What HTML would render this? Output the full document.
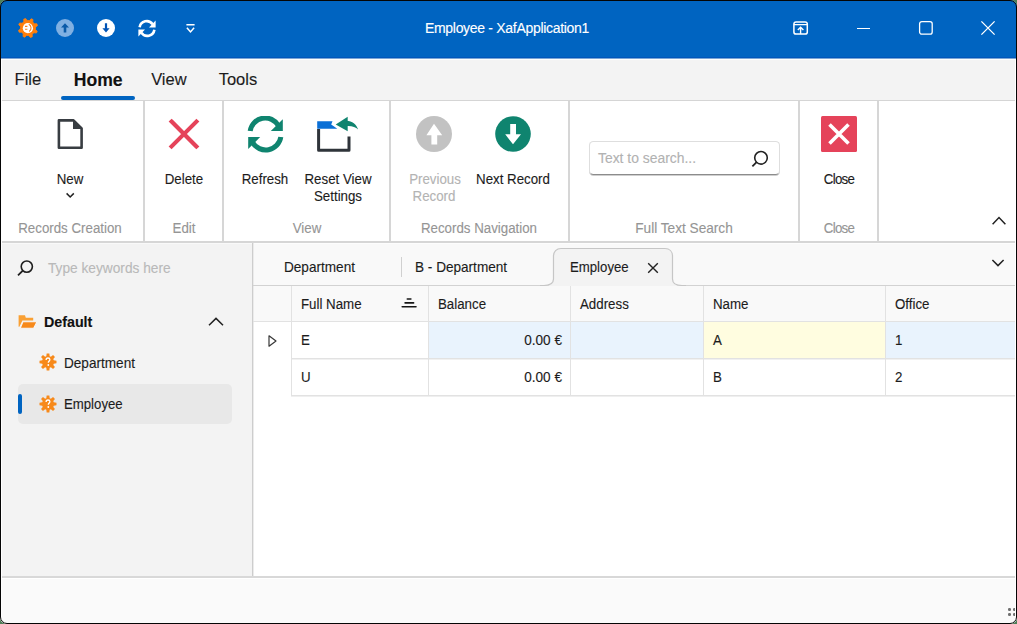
<!DOCTYPE html>
<html><head><meta charset="utf-8"><title>Employee - XafApplication1</title>
<style>
html,body{margin:0;padding:0;}
body{width:1017px;height:624px;overflow:hidden;background:#4f7f58;position:relative;font-family:"Liberation Sans",sans-serif;}
#win{position:absolute;left:0;top:0;width:1017px;height:624px;border-radius:7px;overflow:hidden;background:#fff;}
.t{position:absolute;white-space:nowrap;-webkit-text-stroke:0.12px currentColor;}
.b{position:absolute;display:block;}
#frame{position:absolute;left:0;top:0;width:1017px;height:624px;box-sizing:border-box;border:1px solid #050505;border-radius:7px;pointer-events:none;}
#hl{position:absolute;left:1px;top:59px;width:1015px;height:564px;box-sizing:border-box;border-left:1px solid #fff;border-right:1px solid #fff;pointer-events:none;}
</style></head>
<body><div id="win">
<div class="b" style="left:0px;top:0px;width:1017px;height:58px;background:#0064c1;"></div>
<div class="b" style="left:0px;top:57px;width:1017px;height:1px;background:#0056bb;"></div>
<svg class="b" style="left:16px;top:16px" width="24" height="24" viewBox="0 0 24 24"><path d="M7.81,5.66 L7.73,3.18 L9.60,2.50 L11.14,4.45 L13.52,4.55 L15.21,2.74 L17.03,3.59 L16.73,6.05 L18.34,7.81 L20.82,7.73 L21.50,9.60 L19.55,11.14 L19.45,13.52 L21.26,15.21 L20.41,17.03 L17.95,16.73 L16.19,18.34 L16.27,20.82 L14.40,21.50 L12.86,19.55 L10.48,19.45 L8.79,21.26 L6.97,20.41 L7.27,17.95 L5.66,16.19 L3.18,16.27 L2.50,14.40 L4.45,12.86 L4.55,10.48 L2.74,8.79 L3.59,6.97 L6.05,7.27Z" fill="#ff7f0a" stroke="#ff7f0a" stroke-width="0.8" stroke-linejoin="round"/><circle cx="11.9" cy="12.2" r="5.1" fill="#fff"/><path d="M9 10.4h2.4M9 13.3h2.4" stroke="#f58220" stroke-width="1.1"/><path d="M12.8 8.3a4.2 4.2 0 0 1 0.4 7.2" stroke="#f58220" stroke-width="1.1" fill="none"/></svg>
<svg class="b" style="left:56px;top:19px" width="18" height="18" viewBox="0 0 18 18"><circle cx="9" cy="9" r="9" fill="#80b0e2"/><path d="M9 4.2 L13 8.6 H10.3 V13.6 H7.7 V8.6 H5 Z" fill="#0a5aa8"/></svg>
<svg class="b" style="left:97px;top:19px" width="18" height="18" viewBox="0 0 18 18"><circle cx="9" cy="9" r="9" fill="#fff"/><path d="M9 13.6 L12.6 9.3 H10.1 V4.2 H7.9 V9.3 H5.4 Z" fill="#0053b5"/></svg>
<svg class="b" style="left:137px;top:19px" width="20" height="19" viewBox="0 0 20 19"><path d="M2.6 8.2 A7.2 7.2 0 0 1 15.6 5.2" stroke="#fff" stroke-width="2.6" fill="none"/><path d="M18.6 1.6 V8.4 H12 Z" fill="#fff"/><path d="M17.4 10.8 A7.2 7.2 0 0 1 4.4 13.8" stroke="#fff" stroke-width="2.6" fill="none"/><path d="M1.4 17.4 V10.6 H8 Z" fill="#fff"/></svg>
<svg class="b" style="left:185px;top:22px" width="11" height="12" viewBox="0 0 11 12"><path d="M1.4 2.8 H9.6" stroke="#fff" stroke-width="1.5"/><path d="M1.9 5.7 L5.5 9.9 L9.1 5.7" stroke="#fff" stroke-width="1.5" fill="none"/></svg>
<div class="t" style="top:19.52px;font-size:14.56px;line-height:17.47px;color:#ffffff;letter-spacing:-0.31px;transform:scaleX(0.9615);transform-origin:50% 0;left:357.35px;width:300px;text-align:center;">Employee - XafApplication1</div>
<svg class="b" style="left:792px;top:20px" width="18" height="16" viewBox="0 0 18 16"><rect x="1.9" y="1.9" width="13.4" height="12.2" rx="2.2" stroke="#fff" stroke-width="1.5" fill="none"/><path d="M1.9 4.6 H15.3" stroke="#fff" stroke-width="1.3"/><path d="M8.6 14 V7.4 M5.8 10 L8.6 7.2 L11.4 10" stroke="#fff" stroke-width="1.4" fill="none"/></svg>
<div class="b" style="left:857px;top:27.9px;width:13.2px;height:1.5px;background:#fff;"></div>
<svg class="b" style="left:918px;top:20px" width="16" height="16" viewBox="0 0 16 16"><rect x="1.6" y="1.6" width="12.6" height="12.6" rx="2.2" stroke="#fff" stroke-width="1.3" fill="none"/></svg>
<svg class="b" style="left:980px;top:20px" width="16" height="16" viewBox="0 0 16 16"><path d="M1.4 1.4 L14.6 14.6 M14.6 1.4 L1.4 14.6" stroke="#fff" stroke-width="1.3"/></svg>
<div class="b" style="left:0px;top:58px;width:1017px;height:42px;background:#f3f3f3;"></div>
<div class="b" style="left:0px;top:58px;width:1017px;height:1px;background:#7aa6d6;"></div>
<div class="b" style="left:0px;top:59px;width:1017px;height:1px;background:#fdfdfd;"></div>
<div class="t" style="top:70.38px;font-size:16.5px;line-height:19.8px;color:#1c1c1c;left:14.60px;">File</div>
<div class="t" style="top:70.14px;font-size:17.6px;line-height:21.12px;color:#111;font-weight:700;left:-51.80px;width:300px;text-align:center;">Home</div>
<div class="t" style="top:70.38px;font-size:16.5px;line-height:19.8px;color:#1c1c1c;left:18.90px;width:300px;text-align:center;">View</div>
<div class="t" style="top:70.38px;font-size:16.5px;line-height:19.8px;color:#1c1c1c;left:87.90px;width:300px;text-align:center;">Tools</div>
<div class="b" style="left:60.8px;top:96.1px;width:74.3px;height:3.7px;background:#0064c1;border-radius:2px;"></div>
<div class="b" style="left:0px;top:100px;width:1017px;height:1px;background:#d5d5d5;"></div>
<div class="b" style="left:0px;top:101px;width:1017px;height:140px;background:#ffffff;"></div>
<div class="b" style="left:0px;top:241px;width:1017px;height:2px;background:#d6d6d6;"></div>
<div class="b" style="left:143px;top:101px;width:2px;height:140px;background:#d6d6d6;"></div>
<div class="b" style="left:222px;top:101px;width:2px;height:140px;background:#d6d6d6;"></div>
<div class="b" style="left:389px;top:101px;width:2px;height:140px;background:#d6d6d6;"></div>
<div class="b" style="left:568px;top:101px;width:2px;height:140px;background:#d6d6d6;"></div>
<div class="b" style="left:798px;top:101px;width:2px;height:140px;background:#d6d6d6;"></div>
<div class="b" style="left:877px;top:101px;width:2px;height:140px;background:#d6d6d6;"></div>
<svg class="b" style="left:56px;top:118px" width="29" height="33" viewBox="0 0 29 33"><path d="M2.9 2.4 H17.5 L25.6 10.5 V29.8 H2.9 Z" stroke="#383d42" stroke-width="2.6" fill="none" stroke-linejoin="round"/><path d="M17 1.6 V11 H26.4 Z" fill="#383d42"/></svg>
<div class="t" style="top:170.71px;font-size:13.83px;line-height:16.6px;color:#1c1c1c;transform:scaleX(0.9615);transform-origin:50% 0;left:-79.70px;width:300px;text-align:center;">New</div>
<svg class="b" style="left:65px;top:191px" width="10" height="8" viewBox="0 0 10 8"><path d="M1.6 2.4 L5.2 6 L8.8 2.4" stroke="#222" stroke-width="1.5" fill="none"/></svg>
<svg class="b" style="left:168px;top:118px" width="32" height="32" viewBox="0 0 32 32"><path d="M3.6 3.6 L28.4 28.4 M28.4 3.6 L3.6 28.4" stroke="#e5435a" stroke-width="4.2" stroke-linecap="square"/></svg>
<div class="t" style="top:170.71px;font-size:13.83px;line-height:16.6px;color:#1c1c1c;transform:scaleX(0.9615);transform-origin:50% 0;left:33.50px;width:300px;text-align:center;">Delete</div>
<svg class="b" style="left:247px;top:116px" width="37" height="37" viewBox="0 0 37 37"><path d="M3.2 15 A15.2 15.2 0 0 1 31.4 9.6" stroke="#0f846f" stroke-width="5" fill="none"/><path d="M35.8 3.2 V15 H23.8 Z" fill="#0f846f"/><path d="M33.8 21 A15.2 15.2 0 0 1 5.6 26.4" stroke="#0f846f" stroke-width="5" fill="none"/><path d="M1.2 33 V21 H13.2 Z" fill="#0f846f"/></svg>
<div class="t" style="top:170.71px;font-size:13.83px;line-height:16.6px;color:#1c1c1c;transform:scaleX(0.9615);transform-origin:50% 0;left:115.00px;width:300px;text-align:center;">Refresh</div>
<svg class="b" style="left:315px;top:114px" width="46" height="40" viewBox="0 0 46 40"><path d="M3.6 15 V36.2 H34 V22.5" stroke="#2f343a" stroke-width="3" fill="none" stroke-linejoin="round"/><path d="M2.2 7.2 H17.5 L16.2 10.4 L22.3 14.8 H2.2 Z" fill="#0a6fd6"/><path d="M20.7 10.4 L32.7 2.8 V17.3 Z" fill="#0f846f"/><path d="M31 6.8 C37 6.6 41.5 10.2 43.1 15.6 C40.6 12.8 36.8 11.6 31 12 Z" fill="#0f846f"/></svg>
<div class="t" style="top:170.71px;font-size:13.83px;line-height:16.6px;color:#1c1c1c;transform:scaleX(0.9615);transform-origin:50% 0;left:187.90px;width:300px;text-align:center;">Reset View</div>
<div class="t" style="top:187.81px;font-size:13.83px;line-height:16.6px;color:#1c1c1c;transform:scaleX(0.9615);transform-origin:50% 0;left:187.60px;width:300px;text-align:center;">Settings</div>
<svg class="b" style="left:416px;top:116px" width="36" height="36" viewBox="0 0 36 36"><circle cx="18" cy="18" r="18" fill="#c2c2c2"/><path d="M18 7.8 L26.2 19.2 H21.2 V28.5 H15.4 V19.2 H10.4 Z" fill="#fff"/></svg>
<div class="t" style="top:170.71px;font-size:13.83px;line-height:16.6px;color:#b3b3b3;transform:scaleX(0.9615);transform-origin:50% 0;left:284.50px;width:300px;text-align:center;">Previous</div>
<div class="t" style="top:187.81px;font-size:13.83px;line-height:16.6px;color:#b3b3b3;transform:scaleX(0.9615);transform-origin:50% 0;left:284.40px;width:300px;text-align:center;">Record</div>
<svg class="b" style="left:495px;top:116px" width="36" height="36" viewBox="0 0 36 36"><circle cx="18" cy="18" r="17.8" fill="#0f846f"/><path d="M18 28.3 L26 18.3 H21 V8 H15.2 V18.3 H10.2 Z" fill="#fff"/></svg>
<div class="t" style="top:170.71px;font-size:13.83px;line-height:16.6px;color:#1c1c1c;transform:scaleX(0.9615);transform-origin:50% 0;left:363.00px;width:300px;text-align:center;">Next Record</div>
<div class="b" style="left:588.5px;top:141px;width:191.5px;height:34.3px;background:#fff;border:1px solid #dedede;border-bottom:1px solid #8c8c8c;border-radius:4.5px;box-sizing:border-box;box-shadow:0 1px 0 #cfcfcf;"></div>
<div class="t" style="top:149.81px;font-size:14.46px;line-height:17.35px;color:#b2b2b2;transform:scaleX(0.9615);transform-origin:0 0;left:597.60px;">Text to search...</div>
<svg class="b" style="left:750px;top:149px" width="20" height="20" viewBox="0 0 20 20"><circle cx="11" cy="8.8" r="6.3" stroke="#222" stroke-width="1.6" fill="none"/><path d="M6.6 13.2 L2.4 17.4" stroke="#222" stroke-width="1.8"/></svg>
<svg class="b" style="left:821px;top:116px" width="36" height="36" viewBox="0 0 36 36"><rect x="0" y="0" width="36" height="36" rx="1.5" fill="#e5435a"/><path d="M8.5 8.5 L27.5 27.5 M27.5 8.5 L8.5 27.5" stroke="#fff" stroke-width="3.6"/></svg>
<div class="t" style="top:170.71px;font-size:13.83px;line-height:16.6px;color:#1c1c1c;letter-spacing:-0.73px;transform:scaleX(0.9615);transform-origin:50% 0;left:689.05px;width:300px;text-align:center;">Close</div>
<div class="t" style="top:220.01px;font-size:13.83px;line-height:16.6px;color:#959595;transform:scaleX(0.9615);transform-origin:50% 0;left:-80.00px;width:300px;text-align:center;">Records Creation</div>
<div class="t" style="top:220.01px;font-size:13.83px;line-height:16.6px;color:#959595;transform:scaleX(0.9615);transform-origin:50% 0;left:33.50px;width:300px;text-align:center;">Edit</div>
<div class="t" style="top:220.01px;font-size:13.83px;line-height:16.6px;color:#959595;transform:scaleX(0.9615);transform-origin:50% 0;left:156.50px;width:300px;text-align:center;">View</div>
<div class="t" style="top:220.01px;font-size:13.83px;line-height:16.6px;color:#959595;transform:scaleX(0.9615);transform-origin:50% 0;left:329.40px;width:300px;text-align:center;">Records Navigation</div>
<div class="t" style="top:219.66px;font-size:14.2px;line-height:17.04px;color:#959595;transform:scaleX(0.9615);transform-origin:50% 0;left:534.20px;width:300px;text-align:center;">Full Text Search</div>
<div class="t" style="top:220.01px;font-size:13.83px;line-height:16.6px;color:#959595;letter-spacing:-0.73px;transform:scaleX(0.9615);transform-origin:50% 0;left:689.05px;width:300px;text-align:center;">Close</div>
<svg class="b" style="left:991px;top:215px" width="16" height="11" viewBox="0 0 16 11"><path d="M1.6 9.2 L8 2.6 L14.4 9.2" stroke="#222" stroke-width="1.5" fill="none"/></svg>
<div class="b" style="left:0px;top:243px;width:252px;height:333px;background:#f3f3f3;"></div>
<div class="b" style="left:0px;top:243px;width:252px;height:1px;background:#f9f9f9;"></div>
<div class="b" style="left:252px;top:243px;width:1px;height:333px;background:#cdcdcd;"></div>
<div class="b" style="left:253px;top:243px;width:1px;height:333px;background:#ebebeb;"></div>
<svg class="b" style="left:15px;top:258px" width="20" height="20" viewBox="0 0 20 20"><circle cx="11.8" cy="8.6" r="5.6" stroke="#1e1e1e" stroke-width="1.6" fill="none"/><path d="M7.8 12.6 L3 17.4" stroke="#1e1e1e" stroke-width="1.8"/></svg>
<div class="t" style="top:259.51px;font-size:14.25px;line-height:17.1px;color:#b9b9b9;transform:scaleX(0.9615);transform-origin:0 0;left:47.60px;">Type keywords here</div>
<svg class="b" style="left:14px;top:310px" width="30" height="24" viewBox="0 0 30 24"><path d="M4.6 5.2 H11 L11.8 7.8 H19.2 V10.6 H8.4 L5.4 16.8 H4.6 Z" fill="#f9a034"/><path d="M8.9 11.7 H23 L19.7 18.2 H6.2 Z" fill="#f7891a" stroke="#f6f6f6" stroke-width="1.1" stroke-linejoin="round"/></svg>
<div class="t" style="top:313.57px;font-size:14.3px;line-height:17.16px;color:#111;font-weight:700;left:43.90px;">Default</div>
<svg class="b" style="left:207px;top:316px" width="18" height="11" viewBox="0 0 18 11"><path d="M2 9.2 L9 2.4 L16 9.2" stroke="#222" stroke-width="1.5" fill="none"/></svg>
<svg class="b" style="left:38.7px;top:353.2px" width="18" height="18" viewBox="0 0 18 18"><path d="M7.33,3.24 L7.65,0.51 L10.35,0.51 L10.67,3.24 L11.89,3.74 L14.05,2.04 L15.96,3.95 L14.26,6.11 L14.76,7.33 L17.49,7.65 L17.49,10.35 L14.76,10.67 L14.26,11.89 L15.96,14.05 L14.05,15.96 L11.89,14.26 L10.67,14.76 L10.35,17.49 L7.65,17.49 L7.33,14.76 L6.11,14.26 L3.95,15.96 L2.04,14.05 L3.74,11.89 L3.24,10.67 L0.51,10.35 L0.51,7.65 L3.24,7.33 L3.74,6.11 L2.04,3.95 L3.95,2.04 L6.11,3.74Z" fill="#f7891a"/><path d="M7.1 6.9 C7.1 5.6 8 5 9 5 C10.1 5 10.9 5.7 10.9 6.7 C10.9 7.9 9.3 8.2 9.3 9.8" stroke="#fff" stroke-width="1.3" fill="none"/><circle cx="9.3" cy="12" r="0.9" fill="#fff"/></svg>
<div class="t" style="top:354.92px;font-size:14.14px;line-height:16.97px;color:#1c1c1c;transform:scaleX(0.9615);transform-origin:0 0;left:64.30px;">Department</div>
<div class="b" style="left:18px;top:383.5px;width:213.5px;height:40.5px;background:#e8e8e8;border-radius:5px;"></div>
<div class="b" style="left:18px;top:394px;width:3.6px;height:19.5px;background:#0064c1;border-radius:2px;"></div>
<svg class="b" style="left:38.7px;top:395.2px" width="18" height="18" viewBox="0 0 18 18"><path d="M7.33,3.24 L7.65,0.51 L10.35,0.51 L10.67,3.24 L11.89,3.74 L14.05,2.04 L15.96,3.95 L14.26,6.11 L14.76,7.33 L17.49,7.65 L17.49,10.35 L14.76,10.67 L14.26,11.89 L15.96,14.05 L14.05,15.96 L11.89,14.26 L10.67,14.76 L10.35,17.49 L7.65,17.49 L7.33,14.76 L6.11,14.26 L3.95,15.96 L2.04,14.05 L3.74,11.89 L3.24,10.67 L0.51,10.35 L0.51,7.65 L3.24,7.33 L3.74,6.11 L2.04,3.95 L3.95,2.04 L6.11,3.74Z" fill="#f7891a"/><path d="M7.1 6.9 C7.1 5.6 8 5 9 5 C10.1 5 10.9 5.7 10.9 6.7 C10.9 7.9 9.3 8.2 9.3 9.8" stroke="#fff" stroke-width="1.3" fill="none"/><circle cx="9.3" cy="12" r="0.9" fill="#fff"/></svg>
<div class="t" style="top:397.40px;font-size:13.73px;line-height:16.48px;color:#1c1c1c;transform:scaleX(0.9615);transform-origin:0 0;left:64.30px;">Employee</div>
<div class="b" style="left:254px;top:243px;width:762px;height:42px;background:#f9f9f9;"></div>
<div class="b" style="left:254px;top:243px;width:762px;height:1px;background:#fdfdfd;"></div>
<div class="b" style="left:253px;top:285px;width:763px;height:1px;background:#d2d2d2;"></div>
<div class="t" style="top:258.82px;font-size:14.14px;line-height:16.97px;color:#1c1c1c;transform:scaleX(0.9615);transform-origin:0 0;left:283.50px;">Department</div>
<div class="b" style="left:400.5px;top:257px;width:1px;height:19.5px;background:#d0d0d0;"></div>
<div class="t" style="top:258.82px;font-size:14.14px;line-height:16.97px;color:#1c1c1c;transform:scaleX(0.9615);transform-origin:0 0;left:415.30px;">B - Department</div>
<svg class="b" style="left:540px;top:247px" width="146" height="40" viewBox="0 0 146 40"><path d="M0 38.5 H4 C8.5 38.5 13.5 37 13.5 32 V9 C13.5 4.5 16.5 1.5 21 1.5 H125 C129.5 1.5 132.5 4.5 132.5 9 V32 C132.5 37 137.5 38.5 142 38.5 H146 V40 H0 Z" fill="#f3f3f3"/><path d="M0 38.5 H4 C8.5 38.5 13.5 37 13.5 32 V9 C13.5 4.5 16.5 1.5 21 1.5 H125 C129.5 1.5 132.5 4.5 132.5 9 V32 C132.5 37 137.5 38.5 142 38.5 H146" fill="none" stroke="#c6c6c6" stroke-width="1.2"/></svg>
<div class="t" style="top:260.20px;font-size:13.73px;line-height:16.48px;color:#1c1c1c;transform:scaleX(0.9615);transform-origin:0 0;left:569.80px;">Employee</div>
<svg class="b" style="left:646px;top:261px" width="14" height="14" viewBox="0 0 14 14"><path d="M2.2 2.2 L11.8 11.8 M11.8 2.2 L2.2 11.8" stroke="#222" stroke-width="1.4"/></svg>
<svg class="b" style="left:990px;top:257px" width="16" height="12" viewBox="0 0 16 12"><path d="M2.4 3 L8 8.6 L13.6 3" stroke="#222" stroke-width="1.5" fill="none"/></svg>
<div class="b" style="left:254px;top:286px;width:762px;height:290px;background:#ffffff;"></div>
<div class="b" style="left:254px;top:286px;width:762px;height:35px;background:#f9f9f9;"></div>
<div class="b" style="left:253px;top:321px;width:763px;height:1px;background:#e2e2e2;"></div>
<div class="b" style="left:429px;top:322px;width:141px;height:36px;background:#e9f3fd;"></div>
<div class="b" style="left:571px;top:322px;width:132px;height:36px;background:#e9f3fd;"></div>
<div class="b" style="left:704px;top:322px;width:181px;height:36px;background:#fffde0;"></div>
<div class="b" style="left:886px;top:322px;width:130px;height:36px;background:#e9f3fd;"></div>
<div class="b" style="left:291px;top:358px;width:725px;height:1px;background:#e2e2e2;"></div>
<div class="b" style="left:291px;top:359px;width:725px;height:1px;background:#f1f1f1;"></div>
<div class="b" style="left:291px;top:395px;width:725px;height:1px;background:#e2e2e2;"></div>
<div class="b" style="left:291px;top:396px;width:725px;height:1px;background:#efefef;"></div>
<div class="b" style="left:291px;top:286px;width:1px;height:110px;background:#e2e2e2;"></div>
<div class="b" style="left:428px;top:286px;width:1px;height:110px;background:#e2e2e2;"></div>
<div class="b" style="left:570px;top:286px;width:1px;height:110px;background:#e2e2e2;"></div>
<div class="b" style="left:703px;top:286px;width:1px;height:110px;background:#e2e2e2;"></div>
<div class="b" style="left:885px;top:286px;width:1px;height:110px;background:#e2e2e2;"></div>
<div class="t" style="top:296.11px;font-size:13.83px;line-height:16.6px;color:#1c1c1c;transform:scaleX(0.9615);transform-origin:0 0;left:301.20px;">Full Name</div>
<svg class="b" style="left:401px;top:296px" width="17" height="13" viewBox="0 0 17 13"><path d="M6.3 3 H9.9 M4.1 6.9 H12.6 M1.2 10.7 H15" stroke="#161616" stroke-width="1.6" stroke-linecap="round"/></svg>
<div class="t" style="top:296.11px;font-size:13.83px;line-height:16.6px;color:#1c1c1c;transform:scaleX(0.9615);transform-origin:0 0;left:438.30px;">Balance</div>
<div class="t" style="top:296.11px;font-size:13.83px;line-height:16.6px;color:#1c1c1c;transform:scaleX(0.9615);transform-origin:0 0;left:580.20px;">Address</div>
<div class="t" style="top:296.11px;font-size:13.83px;line-height:16.6px;color:#1c1c1c;transform:scaleX(0.9615);transform-origin:0 0;left:712.50px;">Name</div>
<div class="t" style="top:296.11px;font-size:13.83px;line-height:16.6px;color:#1c1c1c;transform:scaleX(0.9615);transform-origin:0 0;left:894.80px;">Office</div>
<svg class="b" style="left:266px;top:334px" width="12" height="14" viewBox="0 0 12 14"><path d="M3 1.8 L10 7 L3 12.2 Z" stroke="#383838" stroke-width="1.2" fill="none" stroke-linejoin="round"/></svg>
<div class="t" style="top:332.21px;font-size:13.83px;line-height:16.6px;color:#1c1c1c;transform:scaleX(0.9615);transform-origin:0 0;left:301.20px;">E</div>
<div class="t" style="top:331.92px;font-size:14.14px;line-height:16.97px;color:#1c1c1c;transform:scaleX(0.9615);transform-origin:100% 0;left:262.30px;width:300px;text-align:right;">0.00 €</div>
<div class="t" style="top:332.21px;font-size:13.83px;line-height:16.6px;color:#1c1c1c;transform:scaleX(0.9615);transform-origin:0 0;left:712.50px;">A</div>
<div class="t" style="top:332.21px;font-size:13.83px;line-height:16.6px;color:#1c1c1c;transform:scaleX(0.9615);transform-origin:0 0;left:895.20px;">1</div>
<div class="t" style="top:369.11px;font-size:13.83px;line-height:16.6px;color:#1c1c1c;transform:scaleX(0.9615);transform-origin:0 0;left:301.20px;">U</div>
<div class="t" style="top:368.82px;font-size:14.14px;line-height:16.97px;color:#1c1c1c;transform:scaleX(0.9615);transform-origin:100% 0;left:262.30px;width:300px;text-align:right;">0.00 €</div>
<div class="t" style="top:369.11px;font-size:13.83px;line-height:16.6px;color:#1c1c1c;transform:scaleX(0.9615);transform-origin:0 0;left:712.50px;">B</div>
<div class="t" style="top:369.11px;font-size:13.83px;line-height:16.6px;color:#1c1c1c;transform:scaleX(0.9615);transform-origin:0 0;left:895.20px;">2</div>
<div class="b" style="left:0px;top:576px;width:1017px;height:2px;background:#d8d8d8;"></div>
<div class="b" style="left:0px;top:578px;width:1017px;height:46px;background:#fafafa;"></div>
<div class="b" style="left:0px;top:578px;width:1017px;height:1px;background:#ffffff;"></div>
<div class="b" style="left:1008px;top:608px;width:2.5px;height:2.5px;background:#707070;border-radius:50%;"></div>
<div class="b" style="left:1013px;top:608px;width:2.5px;height:2.5px;background:#707070;border-radius:50%;"></div>
<div class="b" style="left:1008px;top:613px;width:2.5px;height:2.5px;background:#707070;border-radius:50%;"></div>
<div class="b" style="left:1013px;top:613px;width:2.5px;height:2.5px;background:#707070;border-radius:50%;"></div>

<div id="hl"></div>
</div><div id="frame"></div>
</body></html>
